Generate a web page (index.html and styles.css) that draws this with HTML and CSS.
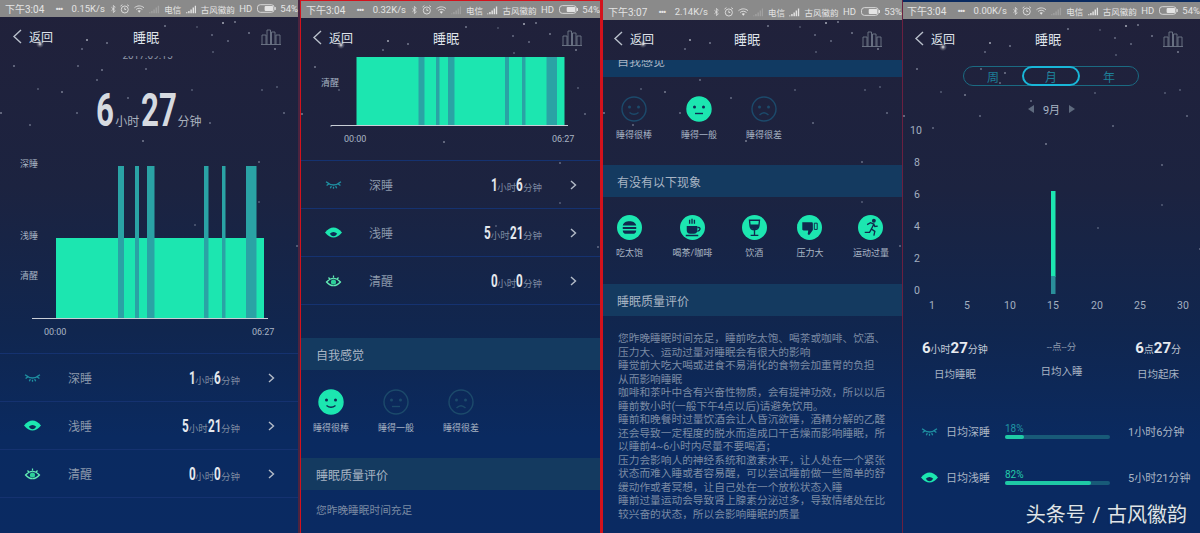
FILE: index.html
```html
<!DOCTYPE html>
<html lang="zh-CN">
<head>
    <meta charset="UTF-8">
    <meta name="viewport" content="width=device-width, initial-scale=1.0">
    <title>睡眠</title>
    <link rel="stylesheet" href="styles.css">
</head>
<body>
    <svg class="defs" aria-hidden="true">
        <symbol id="back" viewBox="0 0 10 15"><path class="ln" d="M9 1 2 7.500 9 14"/></symbol>
        <symbol id="chev" viewBox="0 0 7 10"><path class="ln" d="M1 1l4.500 4L1 9"/></symbol>
        <symbol id="bars" viewBox="0 0 20 17"><path class="ln thin" d="M1 16.500V7h4v9.500M6 16.500V2h3.500v14.500M10.500 16.500V4h3.500v12.500M15 16.500V7h4v9.500M0 16.500h20"/></symbol>
        <symbol id="bt" viewBox="0 0 6 10"><path class="ln thin" d="M.5 2.800l5 4.400L3 9.500V.5l2.500 2.300-5 4.400"/></symbol>
        <symbol id="alarm" viewBox="0 0 10 10"><circle class="ln thin" cx="5" cy="5.500" r="3.700"/><path class="ln thin" d="M.5 2 2.500.5M9.500 2 7.500.5M5 3.500v2h1.500"/></symbol>
        <symbol id="wifi" viewBox="0 0 11 9"><path class="ln thin" d="M.5 3.200c3-2.600 7-2.600 10 0M2.200 5c2-1.700 4.600-1.700 6.600 0"/><path class="ink" d="M3.800 6.400c1-.8 2.400-.8 3.400 0L5.500 8.500z"/></symbol>
        <symbol id="sig" viewBox="0 0 11 9"><path class="ink" d="M0 8h1.500v1H0zM2.300 6.500h1.500V9H2.300zM4.600 5h1.500v4H4.600zM6.900 3h1.500v6H6.900zM9.200 1h1.500v8H9.200z"/></symbol>
        <symbol id="batt" viewBox="0 0 20 9"><rect class="ln thin" x=".5" y=".5" width="17.500" height="8" rx="3"/><rect class="ink" x="8" y="2" width="9" height="5" rx="1"/><rect class="ink" x="18.500" y="3" width="1.200" height="3"/></symbol>

        <symbol id="eye-deep" viewBox="0 0 16 12"><path class="lash deep" d="M1 3.500Q8 9.500 15 3.500M1.500 7 3.500 5.500M5 9.500 6 7.500M11 9.500 10 7.500M14.500 7 12.500 5.500M8 10V8"/></symbol>
        <symbol id="eye-light" viewBox="0 0 16 12"><path class="eye-fill" d="M0 6Q8-3.500 16 6 8 15.500 0 6z"/><path class="eye-dark" d="M4.500 7.200Q8 4 11.500 7.200 8 12 4.500 7.200z"/></symbol>
        <symbol id="eye-awake" viewBox="0 0 16 13"><path class="lash awake" d="M1 8Q8 .5 15 8 8 15.500 1 8zM3 3.500 4.300 5M8 1.500v2M13 3.500 11.700 5"/><circle class="awake-dot" cx="8" cy="8" r="2.600"/></symbol>

        <symbol id="face-good" viewBox="0 0 26 26"><circle class="f-bg" cx="13" cy="13" r="12"/><circle class="f-eye" cx="8.500" cy="11" r="1.500"/><circle class="f-eye" cx="17.500" cy="11" r="1.500"/><path class="f-ln" d="M8.500 16.500Q13 20 17.500 16.500"/></symbol>
        <symbol id="face-ok" viewBox="0 0 26 26"><circle class="f-bg" cx="13" cy="13" r="12"/><circle class="f-eye" cx="8.500" cy="11" r="1.500"/><circle class="f-eye" cx="17.500" cy="11" r="1.500"/><path class="f-ln" d="M9 17.500h8"/></symbol>
        <symbol id="face-bad" viewBox="0 0 26 26"><circle class="f-bg" cx="13" cy="13" r="12"/><circle class="f-eye" cx="8.500" cy="11" r="1.500"/><circle class="f-eye" cx="17.500" cy="11" r="1.500"/><path class="f-ln" d="M8.500 19Q13 14.500 17.500 19"/></symbol>

        <symbol id="ic-burger" viewBox="0 0 26 26"><path class="ic" d="M6 11c.5-3 3.500-4.500 7-4.500S19.500 8 20 11zM6 12.500h14v2H6zM6 16h14c0 2.500-1.500 3.500-3.500 3.500h-7C7.500 19.500 6 18.500 6 16z"/></symbol>
        <symbol id="ic-cup" viewBox="0 0 26 26"><path class="ic" d="M7 11.500h11v4.500c0 2-1.500 3.500-3.500 3.500h-4C8.500 19.500 7 18 7 16zM6 20.500h13V22H6z"/><path class="ic-ln" d="M18 13h1.500c2 0 2 3.500-1.500 4M10 5v4M12.500 4v5M15 5v4"/></symbol>
        <symbol id="ic-wine" viewBox="0 0 26 26"><path class="ic-ln" d="M7.800 5.500h10.400l-.6 6c-.3 2.500-2.200 3.800-4.600 3.800s-4.300-1.300-4.600-3.800zM13 15.300v5.700M9 21.200h8"/><path class="ic" d="M8.300 10h9.400l-.3 2c-.4 2-2.200 2.800-4.400 2.800S9 14 8.600 12z"/></symbol>
        <symbol id="ic-thumb" viewBox="0 0 26 26"><path class="ic" d="M5.500 7.500h9.500c1 0 1.500.5 1.500 1.500v6.500L13 20.500c-1 .5-2-.2-1.800-1.300l.5-3H7c-1 0-1.700-.8-1.500-1.800z"/><path class="ic-ln thin" d="M18 8.500h3v6.500h-3z"/></symbol>
        <symbol id="ic-run" viewBox="0 0 26 26"><circle class="ic" cx="16.500" cy="6" r="2"/><path class="ic-ln" d="M9.500 10 13 8l3.500 1.500-2.500 5 3.500 2.500-1 4.500M14 14.500l-2 3.500H7M16.500 9.500l1 2.500 3-.5"/></symbol>
    </svg>

    <div class="screens">
        <section class="screen">
            <div class="status">
                <span class="st-time">下午3:04</span><span class="st-dots">•••</span><span class="st-rate">0.15K/s</span>
                <svg class="st-bt"><use href="#bt"/></svg><svg class="st-icon"><use href="#alarm"/></svg><svg class="st-icon wide"><use href="#wifi"/></svg><svg class="st-icon wide faint"><use href="#sig"/></svg>
                <span class="st-cn">电信</span><svg class="st-icon wide"><use href="#sig"/></svg><span class="st-cn">古风徽韵</span><span>HD</span><svg class="st-batt"><use href="#batt"/></svg><span>54%</span>
            </div>
            <header class="top">
                <div class="top-back"><svg class="back-icon"><use href="#back"/></svg><span>返回</span></div>
                <div class="top-title">睡眠</div>
                <svg class="bars-icon"><use href="#bars"/></svg>
            </header>
            <div class="date-clip">2017.09.15</div>
            <div class="total">
                <span class="num">6</span><span class="total-unit">小时</span><span class="num two">27</span><span class="total-unit">分钟</span>
            </div>
            <svg class="chart chart-day" viewBox="0 150 298 195">
                <text class="lbl" x="20" y="167">深睡</text>
                <text class="lbl" x="20" y="239">浅睡</text>
                <text class="lbl" x="20" y="279">清醒</text>
                <rect class="sleep" x="56" y="238" width="208" height="80"/>
                <rect class="deep" x="118" y="166" width="6" height="152"/>
                <rect class="deep" x="135" y="166" width="4" height="152"/>
                <rect class="deep" x="147" y="166" width="7.500" height="152"/>
                <rect class="deep" x="204" y="166" width="4.500" height="152"/>
                <rect class="deep" x="222" y="166" width="3.500" height="152"/>
                <rect class="deep" x="246" y="166" width="10.500" height="152"/>
                <path class="axis" d="M32 318.500h236"/>
                <text class="lbl" x="44" y="335">00:00</text>
                <text class="lbl" x="252" y="335">06:27</text>
            </svg>
            <div class="rows first-rows">
                <div class="row"><svg class="eye"><use href="#eye-deep"/></svg><span class="row-name">深睡</span><span class="row-val"><span class="num">1</span><i>小时</i><span class="num">6</span><i>分钟</i></span><svg class="chev"><use href="#chev"/></svg></div>
                <div class="row"><svg class="eye"><use href="#eye-light"/></svg><span class="row-name">浅睡</span><span class="row-val"><span class="num">5</span><i>小时</i><span class="num two">21</span><i>分钟</i></span><svg class="chev"><use href="#chev"/></svg></div>
                <div class="row"><svg class="eye"><use href="#eye-awake"/></svg><span class="row-name">清醒</span><span class="row-val"><span class="num">0</span><i>小时</i><span class="num">0</span><i>分钟</i></span><svg class="chev"><use href="#chev"/></svg></div>
            </div>
        </section>

        <section class="screen screen-red">
            <div class="status">
                <span class="st-time">下午3:04</span><span class="st-dots">•••</span><span class="st-rate">0.32K/s</span>
                <svg class="st-bt"><use href="#bt"/></svg><svg class="st-icon"><use href="#alarm"/></svg><svg class="st-icon wide"><use href="#wifi"/></svg><svg class="st-icon wide faint"><use href="#sig"/></svg>
                <span class="st-cn">电信</span><svg class="st-icon wide"><use href="#sig"/></svg><span class="st-cn">古风徽韵</span><span>HD</span><svg class="st-batt"><use href="#batt"/></svg><span>54%</span>
            </div>
            <header class="top">
                <div class="top-back"><svg class="back-icon"><use href="#back"/></svg><span>返回</span></div>
                <div class="top-title">睡眠</div>
                <svg class="bars-icon"><use href="#bars"/></svg>
            </header>
            <svg class="chart chart-short" viewBox="301 56 298 94">
                <text class="lbl" x="321" y="86">清醒</text>
                <rect class="sleep" x="356.500" y="57" width="208" height="68"/>
                <rect class="deep" x="418.500" y="57" width="6" height="68"/>
                <rect class="deep" x="436" y="57" width="3.500" height="68"/>
                <rect class="deep" x="448" y="57" width="6.500" height="68"/>
                <rect class="deep" x="505" y="57" width="4" height="68"/>
                <rect class="deep" x="522" y="57" width="3.500" height="68"/>
                <rect class="deep" x="546.500" y="57" width="10.500" height="68"/>
                <path class="axis" d="M331 125.500h237"/>
                <text class="lbl" x="344" y="142">00:00</text>
                <text class="lbl" x="552" y="142">06:27</text>
            </svg>
            <div class="rows second-rows">
                <div class="row"><svg class="eye"><use href="#eye-deep"/></svg><span class="row-name">深睡</span><span class="row-val"><span class="num">1</span><i>小时</i><span class="num">6</span><i>分钟</i></span><svg class="chev"><use href="#chev"/></svg></div>
                <div class="row"><svg class="eye"><use href="#eye-light"/></svg><span class="row-name">浅睡</span><span class="row-val"><span class="num">5</span><i>小时</i><span class="num two">21</span><i>分钟</i></span><svg class="chev"><use href="#chev"/></svg></div>
                <div class="row"><svg class="eye"><use href="#eye-awake"/></svg><span class="row-name">清醒</span><span class="row-val"><span class="num">0</span><i>小时</i><span class="num">0</span><i>分钟</i></span><svg class="chev"><use href="#chev"/></svg></div>
            </div>
            <h3 class="sec feel-sec">自我感觉</h3>
            <div class="faces">
                <div class="face-item"><svg class="face on"><use href="#face-good"/></svg><span>睡得很棒</span></div>
                <div class="face-item"><svg class="face"><use href="#face-ok"/></svg><span>睡得一般</span></div>
                <div class="face-item"><svg class="face"><use href="#face-bad"/></svg><span>睡得很差</span></div>
            </div>
            <h3 class="sec">睡眠质量评价</h3>
            <div class="review">您昨晚睡眠时间充足</div>
        </section>

        <section class="screen screen-third">
            <div class="status">
                <span class="st-time">下午3:07</span><span class="st-dots">•••</span><span class="st-rate">2.14K/s</span>
                <svg class="st-bt"><use href="#bt"/></svg><svg class="st-icon"><use href="#alarm"/></svg><svg class="st-icon wide"><use href="#wifi"/></svg><svg class="st-icon wide faint"><use href="#sig"/></svg>
                <span class="st-cn">电信</span><svg class="st-icon wide"><use href="#sig"/></svg><span class="st-cn">古风徽韵</span><span>HD</span><svg class="st-batt"><use href="#batt"/></svg><span>53%</span>
            </div>
            <header class="top">
                <div class="top-back"><svg class="back-icon"><use href="#back"/></svg><span>返回</span></div>
                <div class="top-title">睡眠</div>
                <svg class="bars-icon"><use href="#bars"/></svg>
            </header>
            <h3 class="sec sec-clip">自我感觉</h3>
            <div class="faces">
                <div class="face-item"><svg class="face"><use href="#face-good"/></svg><span>睡得很棒</span></div>
                <div class="face-item"><svg class="face on"><use href="#face-ok"/></svg><span>睡得一般</span></div>
                <div class="face-item"><svg class="face"><use href="#face-bad"/></svg><span>睡得很差</span></div>
            </div>
            <h3 class="sec">有没有以下现象</h3>
            <div class="habits">
                <div class="habit"><svg class="habit-icon"><use href="#ic-burger"/></svg><span>吃太饱</span></div>
                <div class="habit"><svg class="habit-icon"><use href="#ic-cup"/></svg><span>喝茶/咖啡</span></div>
                <div class="habit"><svg class="habit-icon"><use href="#ic-wine"/></svg><span>饮酒</span></div>
                <div class="habit"><svg class="habit-icon"><use href="#ic-thumb"/></svg><span>压力大</span></div>
                <div class="habit"><svg class="habit-icon"><use href="#ic-run"/></svg><span>运动过量</span></div>
            </div>
            <h3 class="sec">睡眠质量评价</h3>
            <div class="review long">
                <p>您昨晚睡眠时间充足，睡前吃太饱、喝茶或咖啡、饮酒、压力大、运动过量对睡眠会有很大的影响</p>
                <p>睡觉前大吃大喝或进食不易消化的食物会加重胃的负担<br>从而影响睡眠</p>
                <p>咖啡和茶叶中含有兴奋性物质，会有提神功效，所以以后睡前数小时(一般下午4点以后)请避免饮用。</p>
                <p>睡前和晚餐时过量饮酒会让人昏沉欲睡，酒精分解的乙醛还会导致一定程度的脱水而造成口干舌燥而影响睡眠，所以睡前4~6小时内尽量不要喝酒；</p>
                <p>压力会影响人的神经系统和激素水平，让人处在一个紧张状态而难入睡或者容易醒，可以尝试睡前做一些简单的舒缓动作或者冥想，让自己处在一个放松状态入睡</p>
                <p>睡前过量运动会导致肾上腺素分泌过多，导致情绪处在比较兴奋的状态，所以会影响睡眠的质量</p>
            </div>
        </section>

        <section class="screen screen-fourth">
            <div class="status">
                <span class="st-time">下午3:04</span><span class="st-dots">•••</span><span class="st-rate">0.00K/s</span>
                <svg class="st-bt"><use href="#bt"/></svg><svg class="st-icon"><use href="#alarm"/></svg><svg class="st-icon wide"><use href="#wifi"/></svg><svg class="st-icon wide faint"><use href="#sig"/></svg>
                <span class="st-cn">电信</span><svg class="st-icon wide"><use href="#sig"/></svg><span class="st-cn">古风徽韵</span><span>HD</span><svg class="st-batt"><use href="#batt"/></svg><span>54%</span>
            </div>
            <header class="top">
                <div class="top-back"><svg class="back-icon"><use href="#back"/></svg><span>返回</span></div>
                <div class="top-title">睡眠</div>
                <svg class="bars-icon"><use href="#bars"/></svg>
            </header>
            <div class="tabs">
                <span class="tab">周</span><span class="tab active">月</span><span class="tab">年</span>
            </div>
            <div class="month"><span class="arrow left"></span><span>9月</span><span class="arrow right"></span></div>
            <svg class="chart chart-month" viewBox="903 122 297 190">
                <text class="tick" x="910" y="134">10</text>
                <text class="tick" x="914" y="166">8</text>
                <text class="tick" x="914" y="198">6</text>
                <text class="tick" x="914" y="230">4</text>
                <text class="tick" x="914" y="262">2</text>
                <text class="tick" x="914" y="294">0</text>
                <rect class="sleep" x="1051" y="191" width="4.500" height="86"/>
                <rect class="deep dim" x="1051" y="276" width="4.500" height="18"/>
                <text class="tick mid" x="932" y="309">1</text>
                <text class="tick mid" x="967" y="309">5</text>
                <text class="tick mid" x="1010" y="309">10</text>
                <text class="tick mid" x="1053" y="309">15</text>
                <text class="tick mid" x="1097" y="309">20</text>
                <text class="tick mid" x="1140" y="309">25</text>
                <text class="tick mid" x="1183" y="309">30</text>
            </svg>
            <div class="stats">
                <div class="stat"><div class="stat-val"><b>6</b>小时<b>27</b>分钟</div><div class="stat-name">日均睡眠</div></div>
                <div class="stat stat-mid"><div class="stat-val">--点--分</div><div class="stat-name">日均入睡</div></div>
                <div class="stat"><div class="stat-val"><b>6</b>点<b>27</b>分</div><div class="stat-name">日均起床</div></div>
            </div>
            <div class="avg-row"><svg class="eye"><use href="#eye-deep"/></svg><span class="avg-name">日均深睡</span>
                <div class="avg-bar"><span class="pct dark">18%</span><div class="track"><div class="fill" style="width:18%"></div></div></div>
                <span class="avg-val">1小时6分钟</span></div>
            <div class="avg-row"><svg class="eye"><use href="#eye-light"/></svg><span class="avg-name">日均浅睡</span>
                <div class="avg-bar"><span class="pct">82%</span><div class="track"><div class="fill" style="width:82%"></div></div></div>
                <span class="avg-val">5小时21分钟</span></div>
            <div class="watermark">头条号 / 古风徽韵</div>
        </section>
    </div>
</body>
</html>
```

FILE: styles.css
```css
* {
    box-sizing: border-box;
}
body {
    margin: 0;
    width: 1200px;
    height: 533px;
    overflow: hidden;
    background: #0a2a60;
    color: #a9b5c4;
    font-family: Roboto, "Noto Sans CJK SC", sans-serif;
}
.defs {
    display: none;
}
.screens {
    display: grid;
    grid-template-columns: 300px 301px 301px 298px;
    height: 533px;
}
.screen {
    position: relative;
    height: 533px;
    overflow: hidden;
    background-repeat: no-repeat;
    background-image:
        radial-gradient(circle at 40px 44px, rgba(255,255,255,.9) 0, rgba(255,255,255,.25) 2px, transparent 4px),
        radial-gradient(circle at 87px 40px, #d8dce6 0, transparent 1.5px),
        radial-gradient(circle at 107px 43px, #b8bfd0 0, transparent 1.2px),
        radial-gradient(circle at 82px 49px, #a0a8bc 0, transparent 1.2px),
        radial-gradient(circle at 165px 26px, #b8bfd0 0, transparent 1.2px),
        radial-gradient(circle at 197px 27px, #70788c 0, transparent 1.2px),
        radial-gradient(circle at 223px 23px, #e0e4ec 0, transparent 1.5px),
        radial-gradient(circle at 235px 22px, #c0c6d4 0, transparent 1.2px),
        radial-gradient(circle at 212px 35px, #a0a8bc 0, transparent 1.2px),
        radial-gradient(circle at 228px 41px, #a0a8bc 0, transparent 1.2px),
        radial-gradient(circle at 249px 33px, #b8bfd0 0, transparent 1.2px),
        radial-gradient(circle at 275px 49px, #c0c6d4 0, transparent 1.2px),
        radial-gradient(circle at 213px 52px, #808aa0 0, transparent 1.2px),
        radial-gradient(circle at 14px 66px, #b8bfd0 0, transparent 1.2px),
        radial-gradient(circle at 78px 66px, #a0a8bc 0, transparent 1.2px),
        radial-gradient(circle at 102px 70px, #b8bfd0 0, transparent 1.2px),
        radial-gradient(circle at 146px 69px, #a0a8bc 0, transparent 1.2px),
        radial-gradient(circle at 97px 80px, #a0a8bc 0, transparent 1.2px),
        radial-gradient(circle at 62px 92px, #c0c6d4 0, transparent 1.2px),
        radial-gradient(circle at 38px 89px, #808aa0 0, transparent 1.2px),
        radial-gradient(circle at 192px 90px, #808aa0 0, transparent 1.2px),
        radial-gradient(circle at 262px 90px, #808aa0 0, transparent 1.2px),
        radial-gradient(circle at 277px 87px, #808aa0 0, transparent 1.2px),
        radial-gradient(circle at 284px 113px, #a0a8bc 0, transparent 1.2px),
        radial-gradient(circle at 77px 113px, #a0a8bc 0, transparent 1.2px),
        radial-gradient(circle at 30px 125px, #a0a8bc 0, transparent 1.2px),
        radial-gradient(circle at 1px 113px, #c0c6d4 0, transparent 1.2px),
        radial-gradient(circle at 128px 98px, #a0a8bc 0, transparent 1.2px),
        radial-gradient(circle at 210px 123px, #a0a8bc 0, transparent 1.2px),
        radial-gradient(circle at 143px 141px, #c0c6d4 0, transparent 1.2px),
        radial-gradient(circle at 259px 162px, #a0a8bc 0, transparent 1.2px),
        radial-gradient(circle at 259px 202px, #808aa0 0, transparent 1.2px),
        radial-gradient(circle at 195px 225px, #808aa0 0, transparent 1.2px),
        radial-gradient(circle at 297px 246px, #a0a8bc 0, transparent 1.2px),
        linear-gradient(#21213a 0, #1c2340 35%, #10264f 62%, #0a2a60 82%, #0a2a62 100%);
    border-right: 2px solid #4a2440;
}
.screen-red {
    border-left: 1px solid #d3121c;
    border-right: 1px solid #d3121c;
    border-top: 1px solid #d3121c;
}
.screen-third {
    border-left: 2px solid #d3121c;
    border-right: 0;
}
.screen-fourth {
    border-left: 1px solid #6a2040;
    border-right: 0;
    padding-top: 2px;
    background-position: 0 3px;
}

/* status bar */
.status {
    display: flex;
    align-items: center;
    gap: 4.5px;
    height: 17px;
    padding-left: 5px;
    background: #8a8a8a;
    color: #e4e4e4;
    font-size: 9.5px;
    white-space: nowrap;
}
.screen-third .status {
    height: 20px;
    padding-top: 3px;
}
.screen-fourth .status {
    padding-left: 4px;
}
.st-time {
    width: 35px;
    font-size: 10px;
    margin-right: 11px;
}
.st-dots {
    width: 9px;
    font-size: 9px;
    letter-spacing: -1px;
    font-weight: 700;
    margin-right: 3px;
}
.st-rate {
    width: 33px;
    margin-right: 2px;
}
.st-cn {
    font-size: 8.5px;
}
.st-bt {
    width: 5px;
    height: 10px;
}
.st-icon {
    width: 10px;
    height: 10px;
}
.st-icon.wide {
    width: 11px;
}
.st-icon.faint {
    opacity: .25;
}
.st-batt {
    width: 20px;
    height: 9px;
}
.ln {
    fill: none;
    stroke: currentColor;
    stroke-width: 1.4;
}
.ln.thin {
    stroke-width: .9;
}
.ink {
    fill: currentColor;
}

/* top bar */
.top {
    display: grid;
    grid-template-columns: 121px auto 1fr;
    align-items: center;
    height: 39px;
    padding: 0 17px 0 12px;
    color: #dfe3ea;
}
.screen-red .top {
    height: 38px;
    padding: 1px 18px 0 11px;
}
.screen-third .top {
    height: 40px;
    padding: 0 20px 3px 10px;
}
.screen-fourth .top {
    padding-left: 11px;
}
.top-back {
    display: flex;
    align-items: center;
    gap: 7px;
    font-size: 12px;
}
.back-icon {
    width: 10px;
    height: 15px;
    color: #b8bfca;
}
.top-title {
    font-size: 13px;
    letter-spacing: .2px;
}
.bars-icon {
    width: 20px;
    height: 17px;
    justify-self: end;
    color: #6f7889;
}

/* first screen head */
.date-clip {
    height: 3px;
    overflow: hidden;
    line-height: 0;
    font-size: 10px;
    text-align: center;
    color: #8d95a6;
    padding-right: 3px;
}
.total {
    display: flex;
    justify-content: center;
    align-items: baseline;
    height: 91px;
    padding: 24px 0 0 2px;
    color: #d6dae0;
    font-size: 46px;
    font-weight: 700;
}
.num {
    display: inline-block;
    width: .37em;
    transform: scaleX(.65);
    transform-origin: 0 50%;
    white-space: nowrap;
}
.num.two {
    width: .74em;
}
.total .num {
    width: .385em;
    transform: scaleX(.68);
}
.total .num.two {
    width: .77em;
}
.total-unit {
    font-size: 12px;
    font-weight: 400;
    color: #a9b1bd;
    margin: 0 2px 0 1px;
}

/* charts */
.chart {
    display: block;
    width: 298px;
}
.chart-day {
    height: 195px;
}
.chart-short {
    height: 94px;
}
.chart-month {
    width: 297px;
    height: 190px;
    margin-top: 6px;
}
.lbl {
    font-size: 9px;
    fill: #a9b5c4;
}
.tick {
    font-size: 10.5px;
    fill: #a3afc0;
}
.tick.mid {
    text-anchor: middle;
}
.sleep {
    fill: #1ce6b0;
}
.deep {
    fill: #2aa3a5;
}
.deep.dim {
    fill: #2a8f9a;
}
.axis {
    stroke: #c9ced6;
    stroke-width: 1;
}

/* rows */
.first-rows {
    margin-top: 8px;
}
.second-rows {
    margin-top: 10px;
}
.row {
    display: flex;
    align-items: center;
    height: 48px;
    padding-left: 24px;
    border-top: 1px solid #153270;
}
.row:last-child {
    height: 49px;
    border-bottom: 1px solid #153270;
}
.eye {
    width: 17px;
    height: 13px;
    flex: none;
}
.row-name {
    margin-left: 27px;
    font-size: 12px;
    color: #8b98ab;
}
.row-val {
    display: flex;
    align-items: baseline;
    margin-left: auto;
    font-size: 18px;
    font-weight: 700;
    color: #e4e8ee;
}
.row-val i {
    font-style: normal;
    font-weight: 400;
    font-size: 9.5px;
    color: #7d8aa0;
}
.chev {
    width: 7px;
    height: 10px;
    margin: 0 23px 0 28px;
    color: #b4bcc8;
}
.lash {
    fill: none;
    stroke-width: 1.2;
}
.lash.deep {
    stroke: #1f90a2;
}
.lash.awake {
    stroke: #62ecb4;
}
.awake-dot {
    fill: #2dcf98;
}
.eye-fill {
    fill: #1ce6b0;
}
.eye-dark {
    fill: #0e2a55;
}

/* sections */
.sec {
    display: flex;
    align-items: center;
    height: 32px;
    margin: 0;
    padding-left: 15px;
    background: #143a60;
    color: #a9b5c4;
    font-size: 12px;
    font-weight: 400;
}
.screen-third .sec {
    padding-left: 14px;
}
.feel-sec {
    margin-top: 33px;
}
.sec-clip {
    height: 17px;
    overflow: hidden;
    align-items: flex-start;
    line-height: 3px;
    padding-top: 1px;
    background: #113a62;
}
.faces {
    display: flex;
    gap: 29px;
    padding: 19px 0 24px 12px;
}
.screen-third .faces {
    padding-left: 13px;
}
.face-item {
    display: flex;
    flex-direction: column;
    align-items: center;
    gap: 8px;
    width: 36px;
    font-size: 9px;
    line-height: 12px;
    white-space: nowrap;
}
.face {
    width: 26px;
    height: 26px;
    margin-bottom: -1px;
    --face-bg: none;
    --face-line: #1c4a6b;
    --face-edge: #1c4a6b;
}
.face.on {
    --face-bg: #1ce6b0;
    --face-line: #0d2b52;
    --face-edge: #1ce6b0;
}
.f-bg {
    fill: var(--face-bg);
    stroke: var(--face-edge);
    stroke-width: 1.4;
}
.f-eye {
    fill: var(--face-line);
}
.f-ln {
    fill: none;
    stroke: var(--face-line);
    stroke-width: 1.4;
}
.habits {
    display: flex;
    justify-content: space-between;
    padding: 18px 13px 25px;
}
.habit {
    display: flex;
    flex-direction: column;
    align-items: center;
    gap: 7px;
    font-size: 9px;
    line-height: 12px;
    white-space: nowrap;
}
.habit-icon {
    width: 25px;
    height: 25px;
    border-radius: 50%;
    background: #1ce6b0;
}
.ic {
    fill: #10294e;
}
.ic-ln {
    fill: none;
    stroke: #10294e;
    stroke-width: 1.4;
}
.ic-ln.thin {
    stroke-width: 1;
}
.review {
    padding: 14px 15px 0;
    font-size: 10.7px;
    line-height: 13.500px;
    color: #7b8aa3;
}
.review.long {
    padding: 16px 14px 0 15px;
}
.review p {
    margin: 0;
}

/* month screen */
.tabs {
    display: flex;
    align-items: stretch;
    height: 20px;
    width: 176px;
    margin: 8px 0 0 60px;
    border: 1px solid #1b6a82;
    border-radius: 10px;
    color: #1d7f97;
    font-size: 12px;
}
.tab {
    flex: 1;
    display: flex;
    align-items: center;
    justify-content: center;
}
.tab.active {
    flex: none;
    width: 58px;
    margin: -1px 0;
    border: 2px solid #19b6d8;
    border-radius: 10px;
}
.month {
    display: flex;
    align-items: center;
    justify-content: center;
    gap: 9px;
    height: 14px;
    margin-top: 16px;
    font-size: 11px;
    color: #a9b5c4;
}
.arrow {
    width: 0;
    height: 0;
    border-top: 4.500px solid transparent;
    border-bottom: 4.500px solid transparent;
}
.arrow.left {
    border-right: 6px solid #5e6a7e;
}
.arrow.right {
    border-left: 6px solid #5e6a7e;
}
.stats {
    display: flex;
    justify-content: space-between;
    height: 96px;
    padding: 27px 19px 0 19px;
    text-align: center;
}
.stat-val {
    font-size: 10px;
    line-height: 18px;
    color: #c2cad6;
}
.stat-val b {
    font-size: 15px;
    color: #e8ebf0;
}
.stat-name {
    margin-top: 9px;
    font-size: 10.500px;
    line-height: 14px;
}
.stat-mid .stat-val {
    font-size: 9.5px;
    line-height: 15px;
    color: #8c99ac;
}
.stat-mid .stat-name {
    margin-top: 11px;
}
.avg-row {
    display: flex;
    align-items: center;
    height: 46px;
    padding-left: 18px;
    font-size: 11px;
}
.avg-name {
    width: 59px;
    margin-left: 8px;
}
.avg-bar {
    width: 105px;
    height: 16px;
}
.pct {
    display: block;
    font-size: 10px;
    line-height: 11px;
    color: #24cdaa;
}
.pct.dark {
    color: #2096a4;
}
.track {
    height: 4px;
    margin-top: 1px;
    border-radius: 2px;
    background: #185a78;
}
.fill {
    height: 4px;
    border-radius: 2px;
    background: #1fc9a5;
}
.avg-val {
    margin-left: 18px;
    white-space: nowrap;
}
.watermark {
    position: absolute;
    right: 13px;
    bottom: 4px;
    font-size: 20px;
    word-spacing: 1.5px;
    line-height: 28px;
    color: #dfe4ea;
    text-shadow: 0 0 2px #1a2a40;
    white-space: nowrap;
}
```
